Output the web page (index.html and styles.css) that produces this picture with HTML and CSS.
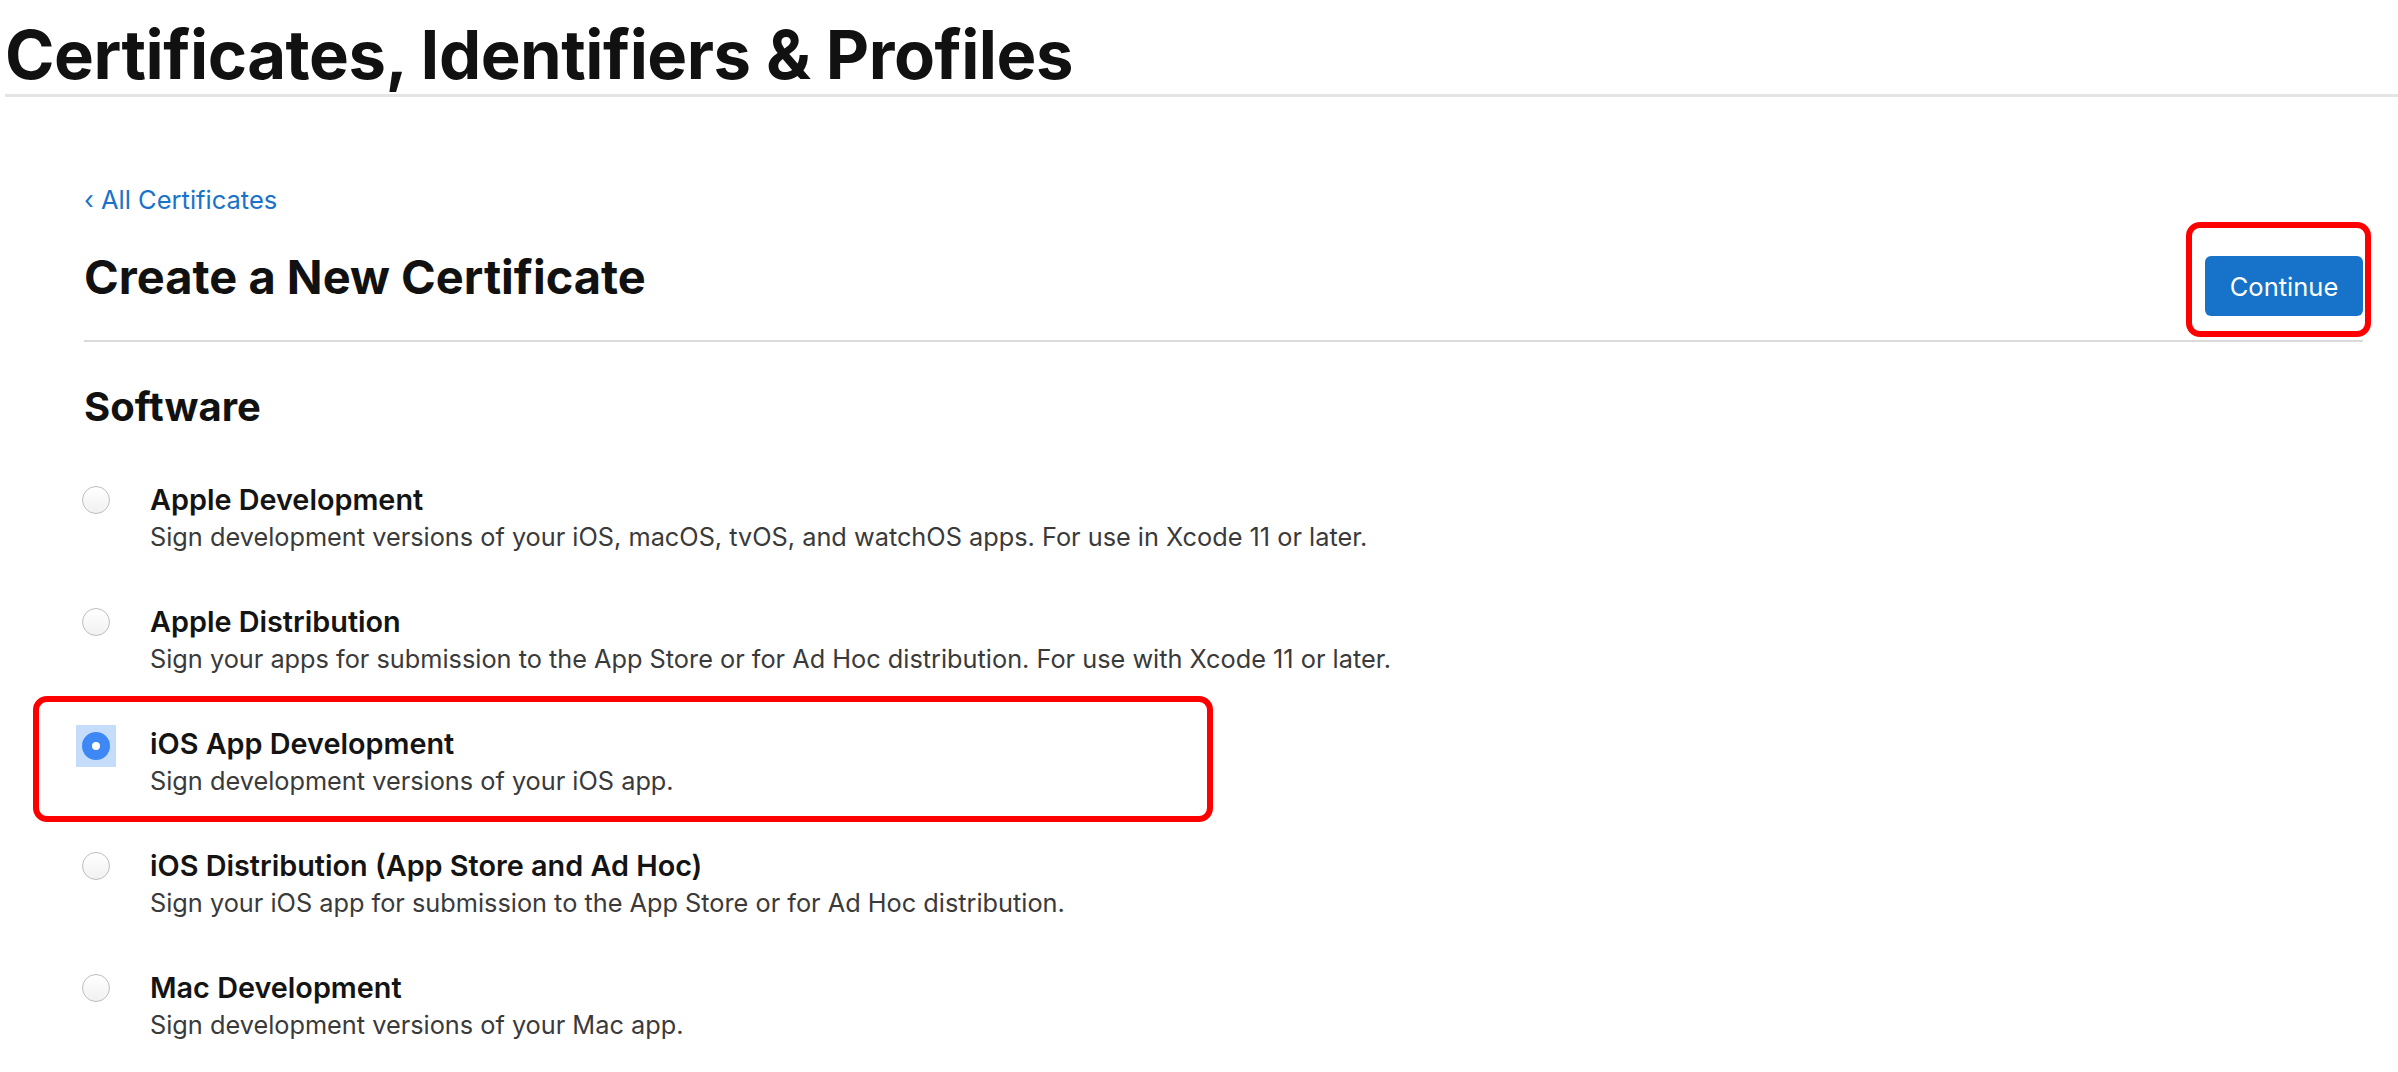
FILE: index.html
```html
<!DOCTYPE html>
<html lang="en">
<head>
    <meta charset="utf-8">
    <title>Certificates, Identifiers &amp; Profiles</title>
    <link rel="stylesheet" href="styles.css">
</head>
<body>
<header class="page_header">
    <h1 class="page_title">Certificates, Identifiers &amp; Profiles</h1>
</header>

<main class="content">
    <a class="back_link" href="#">&lsaquo; All Certificates</a>

    <div class="section_head">
        <h2 class="section_title">Create a New Certificate</h2>
        <span class="continue_wrap">
            <button class="continue_btn" type="button">Continue</button>
            <span class="callout callout_btn"></span>
        </span>
    </div>

    <h3 class="group_title">Software</h3>

    <ul class="option_list">
        <li class="option">
            <span class="radio"></span>
            <div class="option_text">
                <div class="option_name">Apple Development</div>
                <div class="option_desc">Sign development versions of your iOS, macOS, tvOS, and watchOS apps. For use in Xcode 11 or later.</div>
            </div>
        </li>
        <li class="option">
            <span class="radio"></span>
            <div class="option_text">
                <div class="option_name">Apple Distribution</div>
                <div class="option_desc">Sign your apps for submission to the App Store or for Ad Hoc distribution. For use with Xcode 11 or later.</div>
            </div>
        </li>
        <li class="option">
            <span class="radio checked"></span>
            <div class="option_text">
                <div class="option_name">iOS App Development</div>
                <div class="option_desc">Sign development versions of your iOS app.</div>
            </div>
            <span class="callout callout_row"></span>
        </li>
        <li class="option">
            <span class="radio"></span>
            <div class="option_text">
                <div class="option_name">iOS Distribution (App Store and Ad Hoc)</div>
                <div class="option_desc">Sign your iOS app for submission to the App Store or for Ad Hoc distribution.</div>
            </div>
        </li>
        <li class="option">
            <span class="radio"></span>
            <div class="option_text">
                <div class="option_name">Mac Development</div>
                <div class="option_desc">Sign development versions of your Mac app.</div>
            </div>
        </li>
    </ul>
</main>
</body>
</html>
```

FILE: styles.css
```css
body {
    margin: 0;
    font-family: Inter, "Liberation Sans", Arial, sans-serif;
    color: #111111;
    background: #ffffff;
}

.page_header {
    margin-left: 5px;
    border-bottom: 3px solid #e4e4e4;
}

.page_title {
    margin: 0;
    padding-top: 16px;
    font-size: 67px;
    line-height: 78px;
    font-weight: 700;
    letter-spacing: -0.5px;
}

.content {
    padding: 0 35px 0 84px;
}

.back_link {
    display: block;
    margin-top: 88px;
    font-size: 25.5px;
    line-height: 30px;
    color: #1a73c9;
    text-decoration: none;
}

.section_head {
    display: flex;
    justify-content: space-between;
    align-items: flex-start;
    padding-top: 32px;
    padding-bottom: 24px;
    border-bottom: 2px solid #dadada;
}

.section_title {
    margin: 0;
    font-size: 47px;
    line-height: 60px;
    font-weight: 700;
}

.continue_wrap {
    position: relative;
    margin-top: 9px;
}

.continue_btn {
    display: block;
    width: 158px;
    height: 60px;
    border: 0;
    border-radius: 6px;
    background: #1673c9;
    color: #ffffff;
    font-family: inherit;
    font-size: 25.5px;
}

.callout {
    position: absolute;
    box-sizing: border-box;
    border: 6px solid #ff0000;
    border-radius: 14px;
    pointer-events: none;
}

.callout_btn {
    left: -19px;
    top: -34px;
    width: 185px;
    height: 115px;
}

.group_title {
    margin: 42px 0 0;
    font-size: 40px;
    line-height: 46px;
    font-weight: 700;
}

.option_list {
    list-style: none;
    margin: 52px 0 0;
    padding: 0;
    display: flex;
    flex-direction: column;
    gap: 51px;
}

.option {
    position: relative;
    display: flex;
    align-items: flex-start;
}

.radio {
    position: relative;
    flex: none;
    box-sizing: border-box;
    width: 28px;
    height: 28px;
    margin: 4px 40px 0 -2px;
    border: 1.5px solid #bdbdbd;
    border-radius: 50%;
    background: linear-gradient(#ffffff, #f1f1f1);
}

.radio.checked {
    border: 10px solid #3e88f6;
    background: #ffffff;
    margin-top: 6px;
}

.radio.checked::before {
    content: "";
    position: absolute;
    left: -16px;
    top: -17px;
    width: 40px;
    height: 42px;
    background: #c5ddfb;
    z-index: -1;
}

.option_name {
    font-size: 28.8px;
    line-height: 36px;
    font-weight: 600;
    color: #141414;
}

.option_desc {
    margin-top: 3px;
    font-size: 25.3px;
    line-height: 32px;
    color: #3a3a3a;
}

.callout_row {
    left: -51px;
    top: -30px;
    width: 1180px;
    height: 126px;
}
```
